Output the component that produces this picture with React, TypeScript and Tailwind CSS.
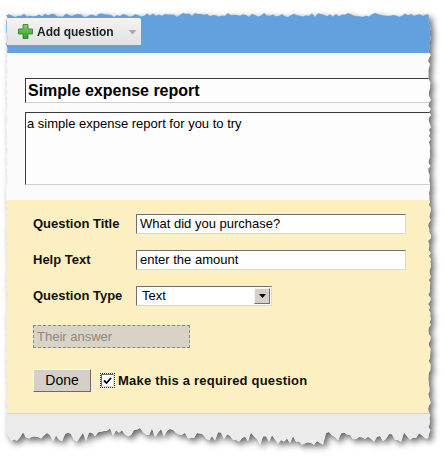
import React from "react";

function makeClip(): string {
  let s = 12345;
  const rnd = () => {
    s = (s * 1103515245 + 12345) % 2147483648;
    return s / 2147483648;
  };
  const W = 428;
  const H = 438;
  const pts: string[] = [];
  for (let x = 0; x <= W - 5; x += 3) {
    pts.push(`${x}px ${(3 + rnd() * 4).toFixed(1)}px`);
  }
  for (let y = 6; y <= H - 14; y += 3) {
    pts.push(`${(W - 6 + rnd() * 3).toFixed(1)}px ${y}px`);
  }
  for (let x = W - 6; x >= 0; x -= 3) {
    const dip = x > 90 && x < 170 ? 4 : x > 250 && x < 320 ? -3 : 0;
    pts.push(`${x}px ${(H - 16 + rnd() * 10 - dip).toFixed(1)}px`);
  }
  for (let y = H - 14; y >= 6; y -= 3) {
    pts.push(`${(rnd() * 1.6).toFixed(1)}px ${y}px`);
  }
  return `polygon(${pts.join(",")})`;
}

const clip = makeClip();

const inset =
  "border border-t-[#6f6f6f] border-l-[#6f6f6f] border-b-[#d8d8d8] border-r-[#d8d8d8] bg-white";

export default function App() {
  return (
    <div
      className="w-[446px] h-[462px] bg-white overflow-hidden"
      style={{ fontFamily: '"Liberation Sans", Arial, sans-serif' }}
    >
      <div className="pt-[10px] pl-[6px] [filter:drop-shadow(3px_3px_3px_rgba(0,0,0,0.6))]">
        <div
          className="w-[428px] h-[438px] overflow-hidden flex flex-col bg-[#ebebeb]"
          style={{ clipPath: clip }}
        >
          {/* blue bar */}
          <div className="h-[43px] bg-[#62a1dd] pt-[8px] pl-[1px] shrink-0">
            <div className="w-[134px] h-[27px] bg-gradient-to-b from-[#f3f3f3] to-[#e2e2e2] rounded-tr-[2px] flex items-center pl-[11px] gap-[4px]">
              <svg width="15" height="15" viewBox="0 0 15 15">
                <defs>
                  <linearGradient id="g" x1="0" y1="0" x2="0" y2="1">
                    <stop offset="0" stopColor="#7fd36a" />
                    <stop offset="1" stopColor="#2f9a2a" />
                  </linearGradient>
                </defs>
                <path
                  d="M5 0.5h5v4.5h4.5v5h-4.5v4.5h-5v-4.5h-4.5v-5h4.5z"
                  fill="url(#g)"
                  stroke="#2e7d26"
                  strokeWidth="0.8"
                />
              </svg>
              <span className="text-[12px] font-bold text-[#222] leading-none">Add question</span>
              <svg width="9" height="6" viewBox="0 0 9 6" className="ml-[10px] mt-[1px]">
                <path d="M0.5 1h8l-4 4.5z" fill="#a9a9a9" />
              </svg>
            </div>
          </div>
          {/* white section */}
          <div className="h-[147px] bg-[#fbfbfb] pt-[25px] pl-[19px] shrink-0">
            <div className="w-[440px] h-[25px] border border-t-[#3a3a3a] border-l-[#3a3a3a] border-b-[#d0d0d0] border-r-[#d0d0d0] bg-[#fdfdfd] flex items-center pl-[2px] text-[16px] font-bold text-black">
              Simple expense report
            </div>
            <div className="mt-[9px] w-[440px] h-[73px] border border-t-[#3a3a3a] border-l-[#3a3a3a] border-b-[#d0d0d0] border-r-[#d0d0d0] bg-[#fdfdfd] pl-[1px] pt-[3px] text-[13px] text-black leading-[16px]">
              a simple expense report for you to try
            </div>
          </div>
          {/* yellow section */}
          <div className="h-[213px] bg-[#fcf0c3] pt-[14px] pl-[27px] shrink-0 flex flex-col text-[13px]">
            <div className="flex items-center h-[20px]">
              <span className="w-[103px] font-bold text-[#111]">Question Title</span>
              <div className={`w-[270px] h-[20px] ${inset} flex items-center pl-[3px] text-black`}>
                What did you purchase?
              </div>
            </div>
            <div className="flex items-center h-[20px] mt-[16px]">
              <span className="w-[103px] font-bold text-[#111]">Help Text</span>
              <div className={`w-[270px] h-[20px] ${inset} flex items-center pl-[3px] text-black`}>
                enter the amount
              </div>
            </div>
            <div className="flex items-center h-[20px] mt-[16px]">
              <span className="w-[103px] font-bold text-[#111]">Question Type</span>
              <div className={`w-[136px] h-[20px] ${inset} flex items-center pl-[5px] text-black`}>
                <span className="flex-1">Text</span>
                <div className="w-[16px] h-[16px] mr-[1px] bg-[#d4d0c8] border border-t-[#f4f4f4] border-l-[#f4f4f4] border-b-[#707070] border-r-[#707070] flex items-center justify-center">
                  <svg width="7" height="4" viewBox="0 0 7 4">
                    <path d="M0 0h7l-3.5 4z" fill="#000" />
                  </svg>
                </div>
              </div>
            </div>
            <div className="mt-[19px] w-[157px] h-[23px] bg-[#d9d3c6] border border-dashed border-[#8a8680] flex items-center pl-[3px] text-[#8c8880]">
              Their answer
            </div>
            <div className="mt-[21px] flex items-center">
              <div className="w-[58px] h-[23px] bg-[#d4d0c8] border border-t-[#f4f4f4] border-l-[#f4f4f4] border-b-[#6a6a6a] border-r-[#6a6a6a] flex items-center justify-center text-[14px] text-black">
                Done
              </div>
              <div className="ml-[9px] w-[15px] h-[15px] border border-dotted border-[#333] flex items-center justify-center">
                <div className={`w-[13px] h-[13px] ${inset} flex items-center justify-center`}>
                  <svg width="9" height="8" viewBox="0 0 9 8">
                    <path d="M1 3.5l2.5 2.5 4.5-5" fill="none" stroke="#000" strokeWidth="1.8" />
                  </svg>
                </div>
              </div>
              <span className="ml-[3px] font-bold text-[#111] tracking-[0.2px]">
                Make this a required question
              </span>
            </div>
          </div>
          {/* gray footer */}
          <div className="flex-1 bg-[#ebebeb] border-t border-[#d9d6c8]" />
        </div>
      </div>
    </div>
  );
}
